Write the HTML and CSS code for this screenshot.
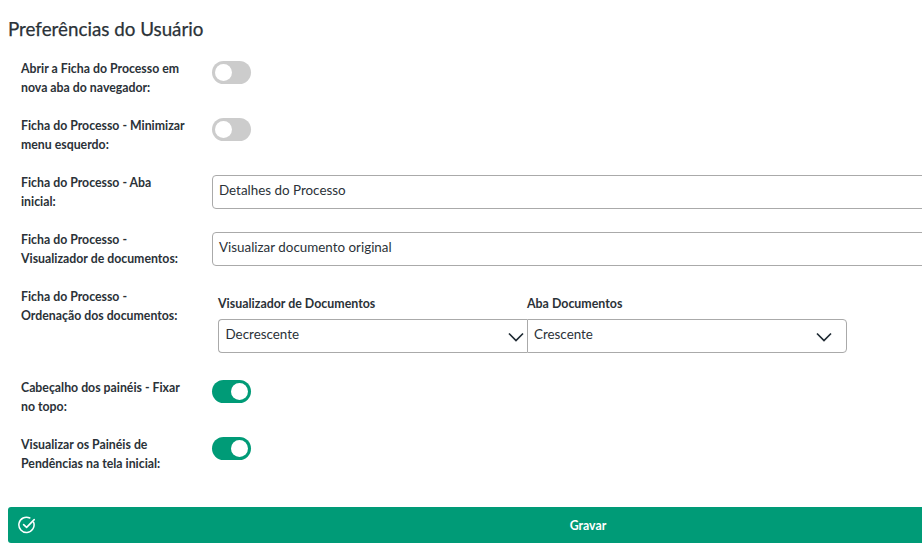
FILE: index.html
```html
<!DOCTYPE html>
<html lang="pt-BR">
<head>
<meta charset="utf-8">
<title>Preferências do Usuário</title>
<link rel="stylesheet" href="styles.css">
</head>
<body>
<main class="page">
  <h1 class="title">Preferências do Usuário</h1>
  <form class="form">
    <div class="row">
      <label class="label">Abrir a Ficha do Processo em nova aba do navegador:</label>
      <span class="toggle"><span class="knob"></span></span>
    </div>
    <div class="row">
      <label class="label">Ficha do Processo - Minimizar menu esquerdo:</label>
      <span class="toggle"><span class="knob"></span></span>
    </div>
    <div class="row">
      <label class="label">Ficha do Processo - Aba inicial:</label>
      <div class="input">Detalhes do Processo</div>
    </div>
    <div class="row">
      <label class="label">Ficha do Processo - Visualizador de documentos:</label>
      <div class="input">Visualizar documento original</div>
    </div>
    <div class="row row-tall">
      <label class="label">Ficha do Processo - Ordenação dos documentos:</label>
      <div class="selects">
        <div class="field">
          <div class="field-label">Visualizador de Documentos</div>
          <div class="select"><span>Decrescente</span>
            <svg class="chev" viewBox="0 0 16 10" width="16" height="10"><path d="M1 1.5 8 8.5 15 1.5" fill="none" stroke="#1f2a33" stroke-width="1.7"/></svg>
          </div>
        </div>
        <div class="field field-b">
          <div class="field-label">Aba Documentos</div>
          <div class="select select-b"><span>Crescente</span>
            <svg class="chev" viewBox="0 0 16 10" width="16" height="10"><path d="M1 1.5 8 8.5 15 1.5" fill="none" stroke="#1f2a33" stroke-width="1.7"/></svg>
          </div>
        </div>
      </div>
    </div>
    <div class="row">
      <label class="label">Cabeçalho dos painéis - Fixar no topo:</label>
      <span class="toggle"><span class="knob"></span></span>
    </div>
    <div class="row">
      <label class="label">Visualizar os Painéis de Pendências na tela inicial:</label>
      <span class="toggle"><span class="knob"></span></span>
    </div>
  </form>
  <button class="save" type="button">
    <svg class="save-icon" viewBox="0 0 18 18" width="18" height="18"><path d="M15.6 6.2A7.6 7.6 0 1 1 11.8 2" fill="none" stroke="#fff" stroke-width="1.5" stroke-linecap="round"/><path d="M5.6 8.6 8.6 11.4 16.2 3.6" fill="none" stroke="#fff" stroke-width="1.6" stroke-linecap="round" stroke-linejoin="round"/></svg>
    <span>Gravar</span>
  </button>
</main>
</body>
</html>
```
FILE: styles.css
```css
* { box-sizing: border-box; }
html, body { margin: 0; width: 922px; height: 557px; overflow: hidden; background: #fff; }
body { font-family: Lato, "Noto Sans", sans-serif; color: #2b3238; }
.page { padding: 16px 0 0 8px; width: 1000px; }
.title { margin: 0; font-size: 18.8px; line-height: 26px; font-weight: 400; color: #2b3238; -webkit-text-stroke: 0.25px #2b3238; }
.form { padding: 16px 0 0 13px; }
.row { display: flex; align-items: flex-start; height: 57px; }
.row:nth-child(-n+2) .toggle, .row:nth-last-child(-n+2) .toggle { margin-top: 3px; }
.row-tall { height: 91px; }
.label { width: 191px; padding-top: 1px; padding-right: 26px; font-size: 12.3px; line-height: 19px; font-weight: 700; color: #2b3238; }
.toggle { display: flex; align-items: center; width: 39px; height: 23px; border-radius: 12px; background: #ccc; padding: 0 3px; }
.row:nth-last-child(-n+2) .toggle { background: #009b77; justify-content: flex-end; }
.knob { width: 17px; height: 17px; border-radius: 50%; background: #fff; }
.input { flex: none; width: 760px; height: 34px; margin-top: 3px; border: 1px solid #aaa; border-radius: 4px; padding: 0 6px; font-size: 13.4px; line-height: 29px; color: #2b3238; }
.selects { display: flex; padding: 0 0 0 6px; }
.field { width: 309px; }
.field-b { width: 320px; }
.field-label { font-size: 12.4px; line-height: 18px; font-weight: 700; margin-top: 9px; margin-bottom: 6px; }
.select { display: flex; align-items: center; justify-content: space-between; height: 34px; border: 1px solid #aaa; border-radius: 4px 0 0 4px; border-right: 0; padding: 0 3px 0 6.5px; font-size: 13.4px; line-height: 29px; }
.select span { align-self: flex-start; }
.select-b { border-right: 1px solid #aaa; border-left: 1px solid #aaa; border-radius: 0 4px 4px 0; padding: 0 14px 0 6px; }
.chev { flex: none; margin-top: 2px; }
.save { position: relative; display: flex; align-items: center; justify-content: center; width: 1160px; height: 36px; margin-top: 16px; padding: 0; border: 0; border-radius: 3px; background: #009b77; color: #fff; font: 700 12.3px Lato, sans-serif; }
.save-icon { position: absolute; left: 10px; top: 9px; }
```
